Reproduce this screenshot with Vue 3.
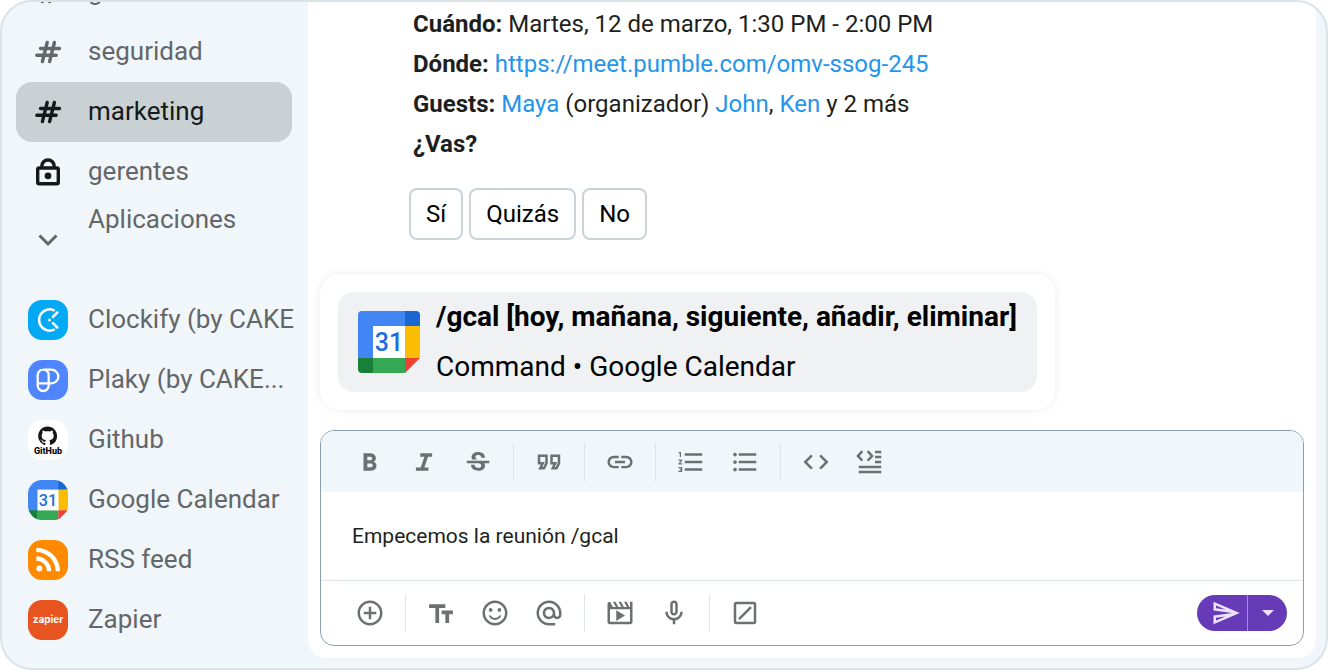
<script setup>
import { ref } from 'vue'

const channels = [
  { name: 'general', icon: 'hash', active: false },
  { name: 'seguridad', icon: 'hash', active: false },
  { name: 'marketing', icon: 'hash', active: true },
  { name: 'gerentes', icon: 'lock', active: false },
]

const apps = [
  { id: 'clockify', name: 'Clockify (by CAKE' },
  { id: 'plaky', name: 'Plaky (by CAKE...' },
  { id: 'github', name: 'Github' },
  { id: 'gcal', name: 'Google Calendar' },
  { id: 'rss', name: 'RSS feed' },
  { id: 'zapier', name: 'Zapier' },
]

const answers = ['Sí', 'Quizás', 'No']

const formatTools = [
  { label: 'Negrita', d: 'M6.8 19V5h5.525q1.625 0 3 1T16.7 8.775q0 1.275-.575 1.963t-1.075.987q.625.275 1.388 1.025T17.2 15q0 2.225-1.625 3.113t-3.05.887zm3.025-2.8h2.6q1.2 0 1.463-.612t.262-.888t-.262-.887t-1.538-.613H9.825zm0-5.7h2.325q.825 0 1.2-.425t.375-.95q0-.6-.425-.975t-1.1-.375H9.825z' },
  { label: 'Cursiva', d: 'M5.5 19v-2.7h3.9l2.9-8.6H9V5h9.5v2.7h-3.3l-2.9 8.6h3.2V19z' },
  { label: 'Tachado', box: '0 -1 24 24', d: 'M7.24 8.75c-.26-.48-.39-1.03-.39-1.67 0-.61.13-1.16.4-1.67.26-.5.63-.93 1.11-1.29.48-.35 1.05-.63 1.7-.83.66-.19 1.39-.29 2.18-.29.81 0 1.54.11 2.21.34.66.22 1.23.54 1.69.94.47.4.83.88 1.08 1.43s.38 1.15.38 1.81h-3.01c0-.31-.05-.59-.15-.85-.09-.27-.24-.49-.44-.68-.2-.19-.45-.33-.75-.44-.3-.1-.66-.16-1.06-.16-.39 0-.74.04-1.03.13s-.53.21-.72.36c-.19.16-.34.34-.44.55-.1.21-.15.43-.15.66 0 .48.25.88.74 1.21.38.25.77.48 1.41.7H7.39c-.05-.08-.11-.17-.15-.25zM21 12v-2H3v2h9.62c.18.07.4.14.55.2.37.17.66.34.87.51s.35.36.43.57c.07.2.11.43.11.69 0 .23-.05.45-.14.66-.09.2-.23.38-.42.53-.19.15-.42.26-.71.35-.29.08-.63.13-1.01.13-.43 0-.83-.04-1.18-.13s-.66-.23-.91-.42c-.25-.19-.45-.44-.59-.75s-.25-.76-.25-1.21H6.4c0 .55.08 1.13.24 1.58s.37.85.65 1.21c.28.35.6.66.98.92.37.26.78.48 1.22.65.44.17.9.3 1.38.39.48.08.96.13 1.44.13.8 0 1.53-.09 2.18-.28s1.21-.45 1.67-.79c.46-.34.82-.77 1.07-1.27s.38-1.07.38-1.71c0-.6-.1-1.14-.31-1.61-.05-.11-.11-.23-.17-.33H21V12z' },
  null,
  { label: 'Cita', d: 'M18.62 18h-5.24l2-4H13V6h8v7.24L18.62 18zm-2-2h.76L19 12.76V8h-4v4h3.62l-2 4zm-8 2H3.38l2-4H3V6h8v7.24L8.62 18zm-2-2h.76L9 12.76V8H5v4h3.62l-2 4z' },
  null,
  { label: 'Enlace', d: 'M3.9 12c0-1.71 1.39-3.1 3.1-3.1h4V7H7c-2.76 0-5 2.24-5 5s2.24 5 5 5h4v-1.9H7c-1.71 0-3.1-1.39-3.1-3.1zM8 13h8v-2H8v2zm9-6h-4v1.9h4c1.71 0 3.1 1.39 3.1 3.1s-1.39 3.1-3.1 3.1h-4V17h4c2.76 0 5-2.24 5-5s-2.24-5-5-5z' },
  null,
  { label: 'Lista numerada', d: 'M2 17h2v.5H3v1h1v.5H2v1h3v-4H2v1zm1-9h1V4H2v1h1v3zm-1 3h1.8L2 13.1v.9h3v-1H3.2L5 10.9V10H2v1zm5-6v2h14V5H7zm0 14h14v-2H7v2zm0-6h14v-2H7v2z' },
  { label: 'Lista con viñetas', d: 'M4 10.5c-.83 0-1.5.67-1.5 1.5s.67 1.5 1.5 1.5 1.5-.67 1.5-1.5-.67-1.5-1.5-1.5zm0-6c-.83 0-1.5.67-1.5 1.5S3.17 7.5 4 7.5 5.5 6.83 5.5 6 4.83 4.5 4 4.5zm0 12c-.83 0-1.5.68-1.5 1.5s.68 1.5 1.5 1.5 1.5-.68 1.5-1.5-.67-1.5-1.5-1.5zM7 19h14v-2H7v2zm0-6h14v-2H7v2zm0-8v2h14V5H7z' },
  null,
  { label: 'Código', d: 'M9.4 16.6L4.8 12l4.6-4.6L8 6l-6 6 6 6 1.4-1.4zm5.2 0l4.6-4.6-4.6-4.6L16 6l6 6-6 6-1.4-1.4z' },
  { label: 'Bloque de código', d: 'M5.2 2.6L6.6 4 3.7 7.1l2.9 3.1-1.4 1.4L1 7.1zM10.8 2.6L9.4 4l2.9 3.1-2.9 3.1 1.4 1.4L15 7.1zM16 3h5v2h-5zM16 7h5v2h-5zM16 11h5v2h-5zM3 15h18v2H3zM3 19h18v2H3z' },
]

const insertTools = [
  { label: 'Adjuntar', d: 'M13 7h-2v4H7v2h4v4h2v-4h4v-2h-4V7zm-1-5C6.48 2 2 6.48 2 12s4.48 10 10 10 10-4.48 10-10S17.52 2 12 2zm0 18c-4.41 0-8-3.59-8-8s3.59-8 8-8 8 3.59 8 8-3.59 8-8 8z' },
  null,
  { label: 'Formato', d: 'M2.5 5v3h5v12h3V8h5V5h-13zm19 5h-9v3h3v7h3v-7h3v-3z' },
  { label: 'Emoji', d: 'M15.5 8a1.5 1.5 0 1 0 0 3 1.5 1.5 0 0 0 0-3zM8.5 8a1.5 1.5 0 1 0 0 3 1.5 1.5 0 0 0 0-3zM12 16c-1.48 0-2.75-.81-3.45-2H6.88c.8 2.05 2.79 3.5 5.12 3.5s4.32-1.45 5.12-3.5h-1.67c-.69 1.19-1.97 2-3.45 2zM12 2C6.48 2 2 6.48 2 12s4.48 10 10 10 10-4.48 10-10S17.52 2 12 2zm0 18c-4.41 0-8-3.59-8-8s3.59-8 8-8 8 3.59 8 8-3.59 8-8 8z' },
  { label: 'Mencionar', d: 'M12 1.95c-5.52 0-10 4.48-10 10s4.48 10 10 10h5v-2h-5c-4.34 0-8-3.66-8-8s3.66-8 8-8 8 3.66 8 8v1.43c0 .79-.71 1.57-1.5 1.57s-1.5-.78-1.5-1.57v-1.43c0-2.76-2.24-5-5-5s-5 2.24-5 5 2.24 5 5 5c1.38 0 2.64-.56 3.54-1.47.65.89 1.77 1.47 2.96 1.47 1.97 0 3.5-1.6 3.5-3.57v-1.43c0-5.52-4.48-10-10-10zm0 13c-1.66 0-3-1.34-3-3s1.34-3 3-3 3 1.34 3 3-1.34 3-3 3z' },
  null,
  { label: 'Vídeo', d: 'M4 3l2.3 4.2h2.4L6.4 3h2l2.3 4.2h2.4L10.8 3h2l2.3 4.2h2.4L15.2 3h2l2.3 4.2h.5V3h2v16.2c0 1-.8 1.8-1.8 1.8H3.8C2.8 21 2 20.2 2 19.2V4.8C2 3.9 2.8 3 4 3zM4 9v10h16V9zM9 9.7l7 4.3-7 4.3z' },
  { label: 'Audio', d: 'M12 14c1.66 0 3-1.34 3-3V5c0-1.66-1.34-3-3-3S9 3.34 9 5v6c0 1.66 1.34 3 3 3zm-1-9c0-.55.45-1 1-1s1 .45 1 1v6c0 .55-.45 1-1 1s-1-.45-1-1V5zm6 6c0 2.76-2.24 5-5 5s-5-2.24-5-5H5c0 3.53 2.61 6.43 6 6.92V21h2v-3.08c3.39-.49 6-3.39 6-6.92h-2z' },
  null,
  { label: 'Comandos', d: 'M5 3h14a2 2 0 0 1 2 2v14a2 2 0 0 1-2 2H5a2 2 0 0 1-2-2V5a2 2 0 0 1 2-2zM5 5v14h14V5zM7.9 17.5l-1.4-1.4L16.1 6.5l1.4 1.4z' },
]

const draft = ref('Empecemos la reunión /gcal')
</script>

<template>
  <div class="frame">
    <nav class="sidebar">
      <a
        v-for="c in channels"
        :key="c.name"
        href="#"
        class="row"
        :class="{ active: c.active }"
      >
        <span class="row-icon">
          <svg v-if="c.icon === 'hash'" class="glyph" viewBox="0 0 30 30" fill="none" stroke="currentColor" stroke-width="3.4" stroke-linecap="round">
            <path d="M7.5 11.5H26.5M3.8 18.3H23.2M14.2 5.5L9.4 24.6M21.4 5.5L16.6 24.6" />
          </svg>
          <svg v-else class="glyph lock" viewBox="0 0 30 30" fill="none" stroke="currentColor" stroke-width="3.4">
            <rect x="4.7" y="11" width="20.6" height="15.8" rx="1.5" />
            <path d="M8.8 11V9.2a6.2 6.2 0 0 1 12.4 0V11" />
            <circle cx="15" cy="18.8" r="3.4" fill="currentColor" stroke="none" />
          </svg>
        </span>
        <span class="row-label">{{ c.name }}</span>
      </a>

      <button type="button" class="section">
        <span class="row-icon">
          <svg class="glyph" viewBox="0 0 30 30" fill="none" stroke="currentColor" stroke-width="3">
            <path d="M6.5 10.5L15 19l8.5-8.5" />
          </svg>
        </span>
        <span>Aplicaciones</span>
      </button>

      <a v-for="a in apps" :key="a.id" href="#" class="row">
        <svg v-if="a.id === 'clockify'" class="app-icon" viewBox="0 0 40 40" fill="none" stroke="#fff" stroke-width="2.5" stroke-linecap="round">
          <rect width="40" height="40" fill="#03a9f4" stroke="none" />
          <path d="M26 10.3A10.6 10.6 0 1 0 26 29.7M29.3 12.5L24.8 17M25 23.2L29.3 27.5" />
          <circle cx="21.5" cy="20" r="1.5" fill="#fff" stroke="none" />
        </svg>
        <svg v-else-if="a.id === 'plaky'" class="app-icon" viewBox="0 0 40 40" fill="none" stroke="#fff" stroke-width="2.3">
          <rect width="40" height="40" fill="#4f86ff" stroke="none" />
          <path d="M15 9.7h8.5a6.8 6.8 0 0 1 0 13.6H9.7M15 9.7a5.3 5.3 0 0 0-5.3 5.8v10a5.5 5.5 0 0 0 11 0V15.5a5.3 5.3 0 0 0-5.7-5.8" />
        </svg>
        <svg v-else-if="a.id === 'github'" class="app-icon" viewBox="0 0 40 40">
          <rect width="40" height="40" fill="#fff" />
          <path transform="translate(10.2 6.6) scale(1.18)" fill="#161616" d="M8 0C3.58 0 0 3.58 0 8c0 3.54 2.29 6.53 5.47 7.59.4.07.55-.17.55-.38 0-.19-.01-.82-.01-1.49-2.01.37-2.53-.49-2.69-.94-.09-.23-.48-.94-.82-1.13-.28-.15-.68-.52-.01-.53.63-.01 1.08.58 1.23.82.72 1.21 1.87.87 2.33.66.07-.52.28-.87.51-1.07-1.78-.2-3.64-.89-3.64-3.95 0-.87.31-1.59.82-2.15-.08-.2-.36-1.02.08-2.12 0 0 .67-.21 2.2.82.64-.18 1.32-.27 2-.27s1.36.09 2 .27c1.53-1.04 2.2-.82 2.2-.82.44 1.1.16 1.92.08 2.12.51.56.82 1.27.82 2.15 0 3.07-1.87 3.75-3.65 3.95.29.25.54.73.54 1.48 0 1.07-.01 1.93-.01 2.2 0 .21.15.46.55.38A8.01 8.01 0 0 0 16 8c0-4.42-3.58-8-8-8z" />
          <text x="20" y="34" text-anchor="middle" class="github-word">GitHub</text>
        </svg>
        <svg v-else-if="a.id === 'gcal'" class="app-icon" viewBox="0 0 62 62">
          <path fill="#4285f4" d="M0 0h48v15H15v33H0z" />
          <path fill="#1967d2" d="M47 0h15v15H47z" />
          <path fill="#fbbc04" d="M47 15h15v32H47z" />
          <path fill="#34a853" d="M15 47h32v15H15z" />
          <path fill="#188038" d="M0 47h15v15H0z" />
          <path fill="#ea4335" d="M47 47h15L47 62z" />
          <path fill="#fff" d="M15 15h32v32H15z" />
          <text x="31" y="40" text-anchor="middle" class="cal-day">31</text>
        </svg>
        <svg v-else-if="a.id === 'rss'" class="app-icon" viewBox="0 0 40 40" fill="none" stroke="#fff" stroke-width="4.3">
          <rect width="40" height="40" fill="#ff8a00" stroke="none" />
          <circle cx="11.3" cy="28.5" r="3" fill="#fff" stroke="none" />
          <path d="M8.3 18.5a12.8 12.8 0 0 1 12.8 12.8M8.3 9.8a21.5 21.5 0 0 1 21.5 21.5" />
        </svg>
        <svg v-else class="app-icon" viewBox="0 0 40 40">
          <rect width="40" height="40" fill="#e8541f" />
          <text x="20" y="23" text-anchor="middle" class="zapier-word">zapier</text>
        </svg>
        <span class="row-label">{{ a.name }}</span>
      </a>
    </nav>

    <main class="main">
      <article class="message">
        <p><b>Cuándo:</b> Martes, 12 de marzo, 1:30 PM - 2:00 PM</p>
        <p><b>Dónde:</b> <a href="#">https://meet.pumble.com/omv-ssog-245</a></p>
        <p><b>Guests:</b> <a href="#">Maya</a> (organizador) <a href="#">John</a>, <a href="#">Ken</a> y 2 más</p>
        <p><b>¿Vas?</b></p>
        <div class="answers">
          <button v-for="a in answers" :key="a" type="button">{{ a }}</button>
        </div>
      </article>

      <section class="suggest">
        <button type="button" class="suggest-item">
          <svg class="cal-logo" viewBox="0 0 62 62">
            <path fill="#4285f4" d="M4 0h44v15H15v33H0V4a4 4 0 0 1 4-4z" />
            <path fill="#1967d2" d="M47 0h11a4 4 0 0 1 4 4v11H47z" />
            <path fill="#fbbc04" d="M47 15h15v32H47z" />
            <path fill="#34a853" d="M15 47h32v15H15z" />
            <path fill="#188038" d="M0 47h15v15H4a4 4 0 0 1-4-4z" />
            <path fill="#ea4335" d="M47 47h15L47 62z" />
            <path fill="#fff" d="M15 15h32v32H15z" />
            <text x="31" y="40" text-anchor="middle" class="cal-day">31</text>
          </svg>
          <span class="suggest-text">
            <b>/gcal [hoy, mañana, siguiente, añadir, eliminar]</b>
            <span>Command • Google Calendar</span>
          </span>
        </button>
      </section>

      <form class="composer" @submit.prevent>
        <div class="tools top">
          <template v-for="(t, i) in formatTools" :key="i">
            <button v-if="t" type="button" class="tool" :aria-label="t.label">
              <svg :viewBox="t.box || '0 0 24 24'"><path fill-rule="evenodd" :d="t.d" /></svg>
            </button>
            <span v-else class="sep"></span>
          </template>
        </div>
        <input v-model="draft" class="draft" type="text" aria-label="Mensaje" />
        <div class="tools bottom">
          <template v-for="(t, i) in insertTools" :key="i">
            <button v-if="t" type="button" class="tool" :aria-label="t.label">
              <svg viewBox="0 0 24 24"><path fill-rule="evenodd" :d="t.d" /></svg>
            </button>
            <span v-else class="sep"></span>
          </template>
          <div class="send">
            <button type="submit" class="send-main" aria-label="Enviar">
              <svg class="send-icon" viewBox="0 0 24 24">
                <path d="M4.01 6.03l7.51 3.22-7.52-1 .01-2.22m7.5 8.72L4 17.97v-2.22l7.51-1M2.01 3L2 10l15 2-15 2 .01 7L23 12 2.01 3z" />
              </svg>
            </button>
            <button type="button" class="send-more" aria-label="Más opciones de envío">
              <svg class="caret" viewBox="0 0 12 6"><path d="M0 0h12L6 6z" /></svg>
            </button>
          </div>
        </div>
      </form>
    </main>
  </div>
</template>

<style>
body {
  background: #fff;
}
</style>

<style scoped>
.frame {
  box-sizing: border-box;
  display: flex;
  height: 100vh;
  overflow: hidden;
  border: 2px solid #dae4e8;
  border-radius: 32px;
  background: #f1f6fa;
  font-family: Roboto, "Liberation Sans", sans-serif;
  color: #1d1f20;
}

button {
  margin: 0;
  padding: 0;
  border: 0;
  background: none;
  color: inherit;
  font: inherit;
  cursor: pointer;
}

a {
  color: #2495ea;
  text-decoration: none;
}

svg {
  display: block;
}

.sidebar {
  flex: 0 0 306px;
  min-width: 0;
  box-sizing: border-box;
  display: flex;
  flex-direction: column;
  justify-content: flex-end;
  padding: 0 0 18px 14px;
}

.row {
  flex: none;
  box-sizing: border-box;
  display: flex;
  align-items: center;
  gap: 20px;
  height: 60px;
  margin-right: 16px;
  padding-left: 12px;
  border-radius: 16px;
  color: #636769;
  font-size: 26px;
  line-height: 40px;
  white-space: nowrap;
}

.row.active {
  background: #c9d1d4;
  color: #16191a;
}

.row-label {
  padding-bottom: 2px;
}

.row-icon {
  flex: none;
  display: flex;
  justify-content: center;
  width: 40px;
}

.glyph {
  width: 30px;
  height: 30px;
}

.lock {
  color: #16191a;
}

.section {
  flex: none;
  display: flex;
  align-items: flex-start;
  gap: 20px;
  height: 88px;
  padding-left: 12px;
  color: #636769;
  font-size: 26px;
  line-height: 34px;
}

.section .row-icon {
  padding-top: 23px;
}

.app-icon {
  flex: none;
  width: 40px;
  height: 40px;
  border-radius: 14px;
}

.github-word {
  font: 800 9px Roboto, sans-serif;
  fill: #000;
}

.zapier-word {
  font: 700 10px Inter, sans-serif;
  fill: #fff;
}

.cal-day {
  font: 500 25px Roboto, sans-serif;
  fill: #1a6fdc;
}

.main {
  flex: 1;
  min-width: 0;
  display: flex;
  flex-direction: column;
  justify-content: flex-end;
  margin: 0 10px 10px 0;
  padding: 0 12px 12px;
  border-radius: 0 0 18px 18px;
  background: #fff;
}

.message {
  padding-left: 89px;
  font-size: 24px;
  line-height: 40px;
}

.message p {
  margin: 0;
  padding-left: 4px;
}

.message b {
  font-weight: 700;
}

.answers {
  display: flex;
  gap: 6px;
  margin: 24px 0 34px;
}

.answers button {
  height: 52px;
  padding: 0 15px;
  border: 2px solid #c9d4d8;
  border-radius: 8px;
  background: #fff;
  color: #000;
}

.suggest {
  align-self: flex-start;
  margin-bottom: 20px;
  padding: 18px;
  border-radius: 20px;
  background: #fff;
  box-shadow: 0 0 10px rgba(0, 0, 0, 0.08);
}

.suggest-item {
  display: flex;
  align-items: center;
  gap: 16px;
  height: 100px;
  padding: 0 20px;
  border-radius: 16px;
  background: #eff1f2;
  color: #000;
  font-size: 28px;
  line-height: 50px;
  text-align: left;
}

.cal-logo {
  flex: none;
  width: 62px;
  height: 62px;
}

.suggest-text {
  display: flex;
  flex-direction: column;
}

.composer {
  overflow: hidden;
  border: 1px solid #8a9fad;
  border-radius: 14px;
  background: #fff;
}

.tools {
  display: flex;
  align-items: center;
  gap: 16px;
  padding: 0 16px 0 30px;
  color: #6c7071;
}

.tools.top {
  height: 61px;
  background: #f1f6fa;
}

.tools.bottom {
  height: 64px;
  border-top: 1px solid #dfe4e6;
}

.tool {
  display: flex;
  justify-content: center;
  align-items: center;
  width: 38px;
  height: 38px;
}

.tool svg {
  width: 30px;
  height: 30px;
  fill: currentColor;
}

.sep {
  width: 1px;
  height: 38px;
  background: #dfe4e6;
}

.draft {
  display: block;
  box-sizing: border-box;
  width: 100%;
  height: 88px;
  padding: 0 31px;
  border: 0;
  outline: 0;
  background: #fff;
  color: #1d1f20;
  font: 21px Roboto, "Liberation Sans", sans-serif;
}

.send {
  display: flex;
  height: 36px;
  margin-left: auto;
  overflow: hidden;
  border-radius: 18px;
  background: #673ab7;
  color: #ece2fa;
}

.send-main {
  display: flex;
  align-items: center;
  width: 51px;
  padding-left: 14px;
  border-right: 1px solid #a58ad5;
}

.send-main,
.send-more {
  box-sizing: border-box;
}

.send-more {
  display: flex;
  justify-content: center;
  align-items: center;
  width: 39px;
}

.send-icon {
  width: 30px;
  height: 30px;
  fill: currentColor;
}

.caret {
  width: 12px;
  height: 6px;
  fill: currentColor;
}
</style>
